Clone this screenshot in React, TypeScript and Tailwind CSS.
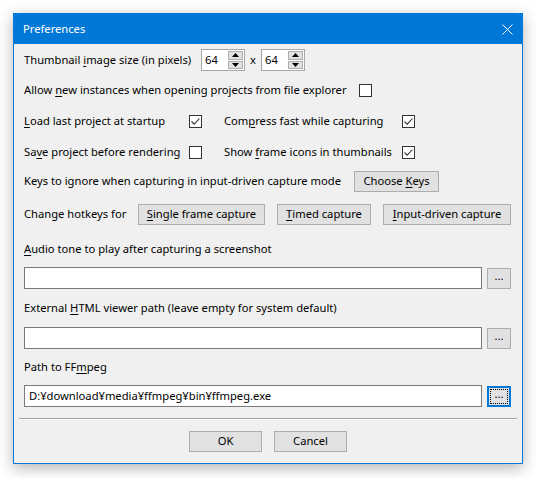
import React from "react";

const font = { fontFamily: '"Noto Sans", "Segoe UI", sans-serif' };

function U({ children }: { children: React.ReactNode }) {
  return <span className="underline underline-offset-2 decoration-1">{children}</span>;
}

function Check({ checked }: { checked?: boolean }) {
  return (
    <div className="w-[13px] h-[13px] border border-[#333333] bg-white flex items-center justify-center shrink-0">
      {checked && (
        <svg width="11" height="11" viewBox="0 0 11 11">
          <path d="M1.5 5.5 L4.2 8.2 L9.5 2.5" fill="none" stroke="#333333" strokeWidth="1.1" />
        </svg>
      )}
    </div>
  );
}

function Btn({ w, children }: { w: string; children: React.ReactNode }) {
  return (
    <div className={`${w} h-[21px] border border-[#adadad] bg-[#e1e1e1] flex items-center justify-center text-black shrink-0`}>
      <span className="whitespace-nowrap">{children}</span>
    </div>
  );
}

function Spin({ value }: { value: string }) {
  return (
    <div className="w-[44px] h-[22px] border border-[#a8a8a8] bg-white flex shrink-0">
      <div className="flex-1 flex items-center pl-[3px]">{value}</div>
      <div className="w-[17px] flex flex-col gap-[1px] p-[1px] bg-white">
        <div className="flex-1 bg-[#e1e1e1] border border-[#adadad] flex items-center justify-center">
          <svg width="7" height="4" viewBox="0 0 7 4"><path d="M0 4 L3.5 0 L7 4 Z" fill="#000" /></svg>
        </div>
        <div className="flex-1 bg-[#e1e1e1] border border-[#adadad] flex items-center justify-center">
          <svg width="7" height="4" viewBox="0 0 7 4"><path d="M0 0 L3.5 4 L7 0 Z" fill="#000" /></svg>
        </div>
      </div>
    </div>
  );
}

function Field({ value, focused }: { value?: string; focused?: boolean }) {
  return (
    <div className="flex items-center gap-[5px] h-[22px]">
      <div className="w-[458px] h-[22px] border border-[#7a7a7a] bg-white flex items-center pl-[4px] text-black whitespace-nowrap">
        {value}
      </div>
      {focused ? (
        <div className="w-[24px] h-[21px] border-2 border-[#0078d7] bg-[#e1e1e1] p-[1px]">
          <div className="w-full h-full border border-dotted border-black flex items-center justify-center leading-none pb-[4px]">
            ...
          </div>
        </div>
      ) : (
        <div className="w-[24px] h-[21px] border border-[#adadad] bg-[#e1e1e1] flex items-center justify-center leading-none pb-[4px]">
          ...
        </div>
      )}
    </div>
  );
}

function L({ w, children }: { w?: string; children: React.ReactNode }) {
  return <span className={`${w ?? ""} whitespace-nowrap shrink-0`}>{children}</span>;
}

export default function App() {
  return (
    <div className="w-[536px] h-[478px] bg-white pl-[13px] pt-[13px] overflow-hidden text-black text-[11.2px]" style={font}>
      <div className="w-[510px] h-[451px] border border-[#0078d7] bg-[#f0f0f0] flex flex-col shadow-[0_4px_14px_rgba(0,0,0,0.3)]">
        <div className="h-[30px] bg-[#0078d7] flex items-center justify-between pl-[9px] pr-[9px] text-white">
          <span>Preferences</span>
          <svg width="11" height="11" viewBox="0 0 11 11">
            <path d="M0.5 0.5 L10.5 10.5 M10.5 0.5 L0.5 10.5" stroke="#ffffff" strokeWidth="1" />
          </svg>
        </div>
        <div className="flex flex-col px-[10px]">
          <div className="mt-[5px] h-[22px] flex items-center">
            <L w="w-[177px]">Thumbnail <U>i</U>mage size (in pixels)</L>
            <Spin value="64" />
            <span className="w-[16px] text-center">x</span>
            <Spin value="64" />
          </div>
          <div className="mt-[9px] h-[20px] flex items-center">
            <L w="w-[335px]">Allow <U>n</U>ew instances when opening projects from file explorer</L>
            <Check />
          </div>
          <div className="mt-[11px] h-[20px] flex items-center">
            <L w="w-[165px]"><U>L</U>oad last project at startup</L>
            <Check checked />
            <span className="w-[22px] shrink-0" />
            <L w="w-[178px]">Com<U>p</U>ress fast while capturing</L>
            <Check checked />
          </div>
          <div className="mt-[11px] h-[20px] flex items-center">
            <L w="w-[165px]">Sa<U>v</U>e project before rendering</L>
            <Check />
            <span className="w-[22px] shrink-0" />
            <L w="w-[178px]">Show <U>f</U>rame icons in thumbnails</L>
            <Check checked />
          </div>
          <div className="mt-[9px] h-[21px] flex items-center">
            <L w="w-[330px]">Keys to ignore when capturing in input-driven capture mode</L>
            <Btn w="w-[85px]">Choose <U>K</U>eys</Btn>
          </div>
          <div className="mt-[12px] h-[21px] flex items-center gap-[12px]">
            <L w="w-[102px]">Change hotkeys for</L>
            <Btn w="w-[127px]"><U>S</U>ingle frame capture</Btn>
            <Btn w="w-[94px]"><U>T</U>imed capture</Btn>
            <Btn w="w-[128px]"><U>I</U>nput-driven capture</Btn>
          </div>
          <div className="mt-[14px] h-[20px] flex items-center">
            <L><U>A</U>udio tone to play after capturing a screenshot</L>
          </div>
          <div className="mt-[8px]">
            <Field />
          </div>
          <div className="mt-[9px] h-[20px] flex items-center">
            <L>External <U>H</U>TML viewer path (leave empty for system default)</L>
          </div>
          <div className="mt-[9px]">
            <Field />
          </div>
          <div className="mt-[8px] h-[20px] flex items-center">
            <L>Path to FF<U>m</U>peg</L>
          </div>
          <div className="mt-[8px]">
            <Field value="D:¥download¥media¥ffmpeg¥bin¥ffmpeg.exe" focused />
          </div>
          <div className="mt-[11px] mx-[-5px] h-[2px] border-t border-[#a0a0a0] border-b border-b-white" />
          <div className="mt-[11px] h-[21px] flex justify-center gap-[12px]">
            <Btn w="w-[73px]">OK</Btn>
            <Btn w="w-[73px]">Cancel</Btn>
          </div>
        </div>
      </div>
    </div>
  );
}
